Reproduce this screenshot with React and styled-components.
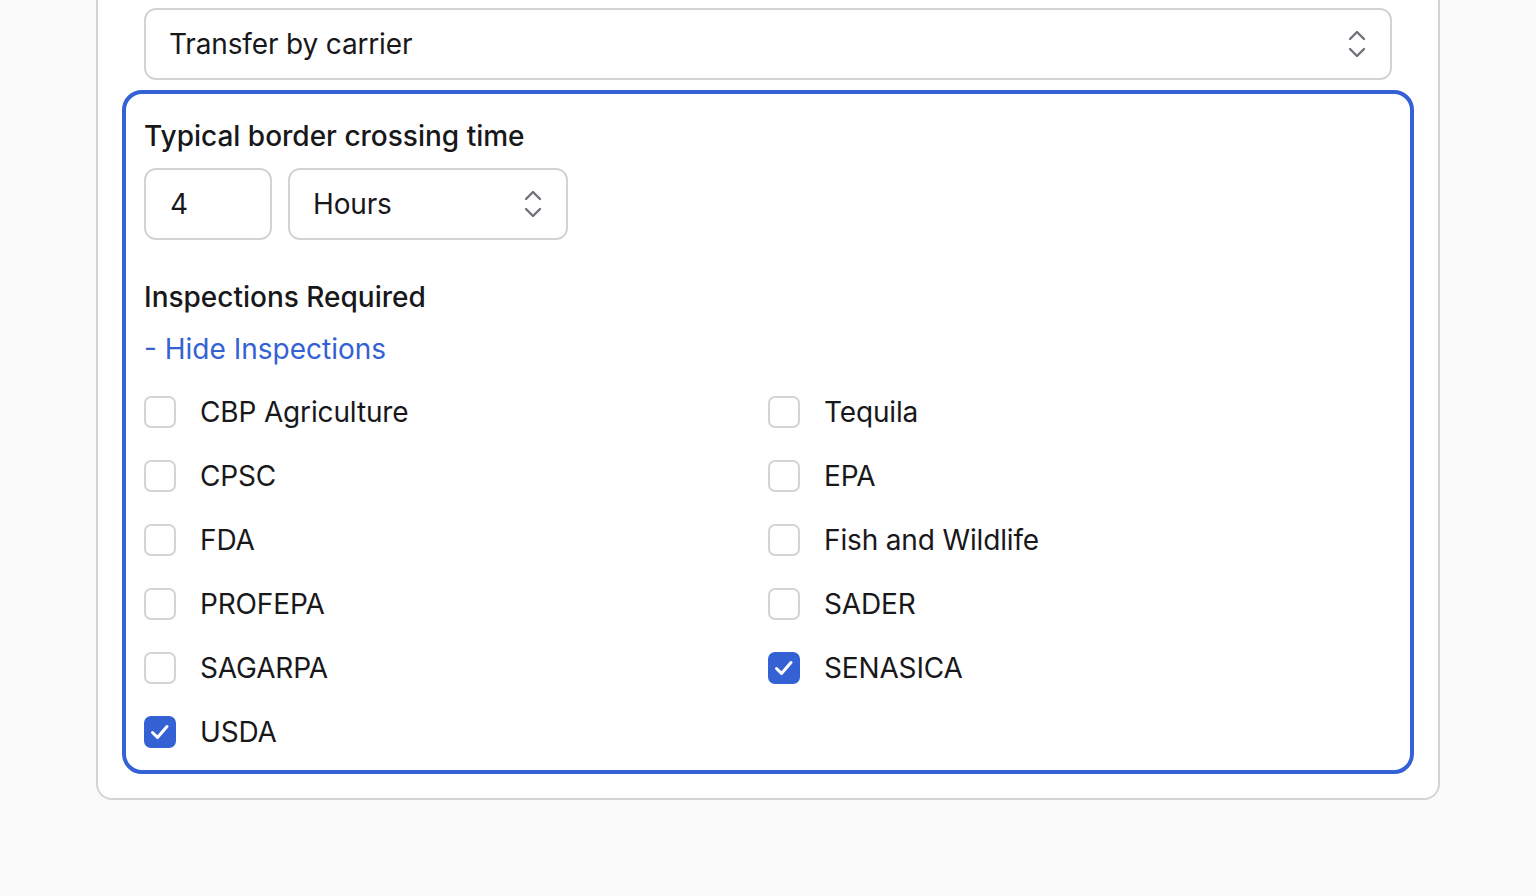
import React, { useState } from "react";
import styled, { createGlobalStyle } from "styled-components";

const GlobalStyle = createGlobalStyle`
  html, body {
    margin: 0;
    background: #fafafa;
    font-family: Inter, "Noto Sans", sans-serif;
    color: #18181b;
  }
`;

const Page = styled.div`
  padding: 0 96px 0 96px;
  height: 896px;
  box-sizing: border-box;
`;

const Card = styled.div`
  background: #fff;
  border: 2px solid #d4d4d8;
  border-top: none;
  border-radius: 0 0 16px 16px;
  padding: 8px 24px 24px;
`;

const SelectWrap = styled.div`
  padding: 0 22px;
  margin-bottom: 10px;
`;

const SelectBox = styled.div`
  display: flex;
  align-items: center;
  justify-content: space-between;
  box-sizing: border-box;
  height: 72px;
  width: ${(p) => p.$width || "100%"};
  padding: 0 24px 0 23px;
  border: 2px solid #d4d4d8;
  border-radius: 12px;
  background: #fff;
  font-size: 28px;
  letter-spacing: -0.15px;
`;

const NumberBox = styled(SelectBox)`
  padding-left: 24px;
`;

const Panel = styled.div`
  border: 4px solid #3461d4;
  border-radius: 20px;
  padding: 24px 18px 22px;
`;

const Label = styled.div`
  font-size: 28px;
  font-weight: 500;
  line-height: 36px;
`;

const InputRow = styled.div`
  display: flex;
  gap: 16px;
  margin: 14px 0 39px;
`;

const Toggle = styled.div`
  color: #3461d4;
  font-size: 28px;
  line-height: 36px;
  margin: 16px 0 29px;
  cursor: pointer;
`;

const Grid = styled.div`
  display: grid;
  grid-template-columns: 1fr 1fr;
  row-gap: 32px;
`;

const Option = styled.label`
  display: flex;
  align-items: center;
  gap: 24px;
  height: 32px;
  font-size: 28px;
  letter-spacing: -0.15px;
  cursor: pointer;
`;

const Box = styled.span`
  display: flex;
  align-items: center;
  justify-content: center;
  width: 32px;
  height: 32px;
  box-sizing: border-box;
  border-radius: 7px;
  border: 2px solid ${(p) => (p.$checked ? "#3461d4" : "#d4d4d8")};
  background: ${(p) => (p.$checked ? "#3461d4" : "#fff")};
`;

const Chevrons = () => (
  <svg width="18" height="28" viewBox="0 0 18 28" fill="none" stroke="#71717a" strokeWidth="2.4" strokeLinecap="round" strokeLinejoin="round">
    <path d="M2 9 L9 2 L16 9" />
    <path d="M2 19 L9 26 L16 19" />
  </svg>
);

const Check = () => (
  <svg width="24" height="24" viewBox="0 0 24 24" fill="none" stroke="#fff" strokeWidth="3" strokeLinecap="round" strokeLinejoin="round">
    <path d="M4.5 12.5 L9.5 17.5 L19 6.5" />
  </svg>
);

const options = [
  ["CBP Agriculture", false],
  ["Tequila", false],
  ["CPSC", false],
  ["EPA", false],
  ["FDA", false],
  ["Fish and Wildlife", false],
  ["PROFEPA", false],
  ["SADER", false],
  ["SAGARPA", false],
  ["SENASICA", true],
  ["USDA", true],
];

export default function App() {
  const [checked, setChecked] = useState(
    Object.fromEntries(options.map(([n, c]) => [n, c]))
  );

  return (
    <>
      <GlobalStyle />
      <Page>
        <Card>
          <SelectWrap>
            <SelectBox>
              <span>Transfer by carrier</span>
              <Chevrons />
            </SelectBox>
          </SelectWrap>
          <Panel>
            <Label>Typical border crossing time</Label>
            <InputRow>
              <NumberBox $width="128px">4</NumberBox>
              <SelectBox $width="280px">
                <span>Hours</span>
                <Chevrons />
              </SelectBox>
            </InputRow>
            <Label>Inspections Required</Label>
            <Toggle>- Hide Inspections</Toggle>
            <Grid>
              {options.map(([name]) => (
                <Option
                  key={name}
                  onClick={() => setChecked((s) => ({ ...s, [name]: !s[name] }))}
                >
                  <Box $checked={checked[name]}>{checked[name] && <Check />}</Box>
                  {name}
                </Option>
              ))}
            </Grid>
          </Panel>
        </Card>
      </Page>
    </>
  );
}
